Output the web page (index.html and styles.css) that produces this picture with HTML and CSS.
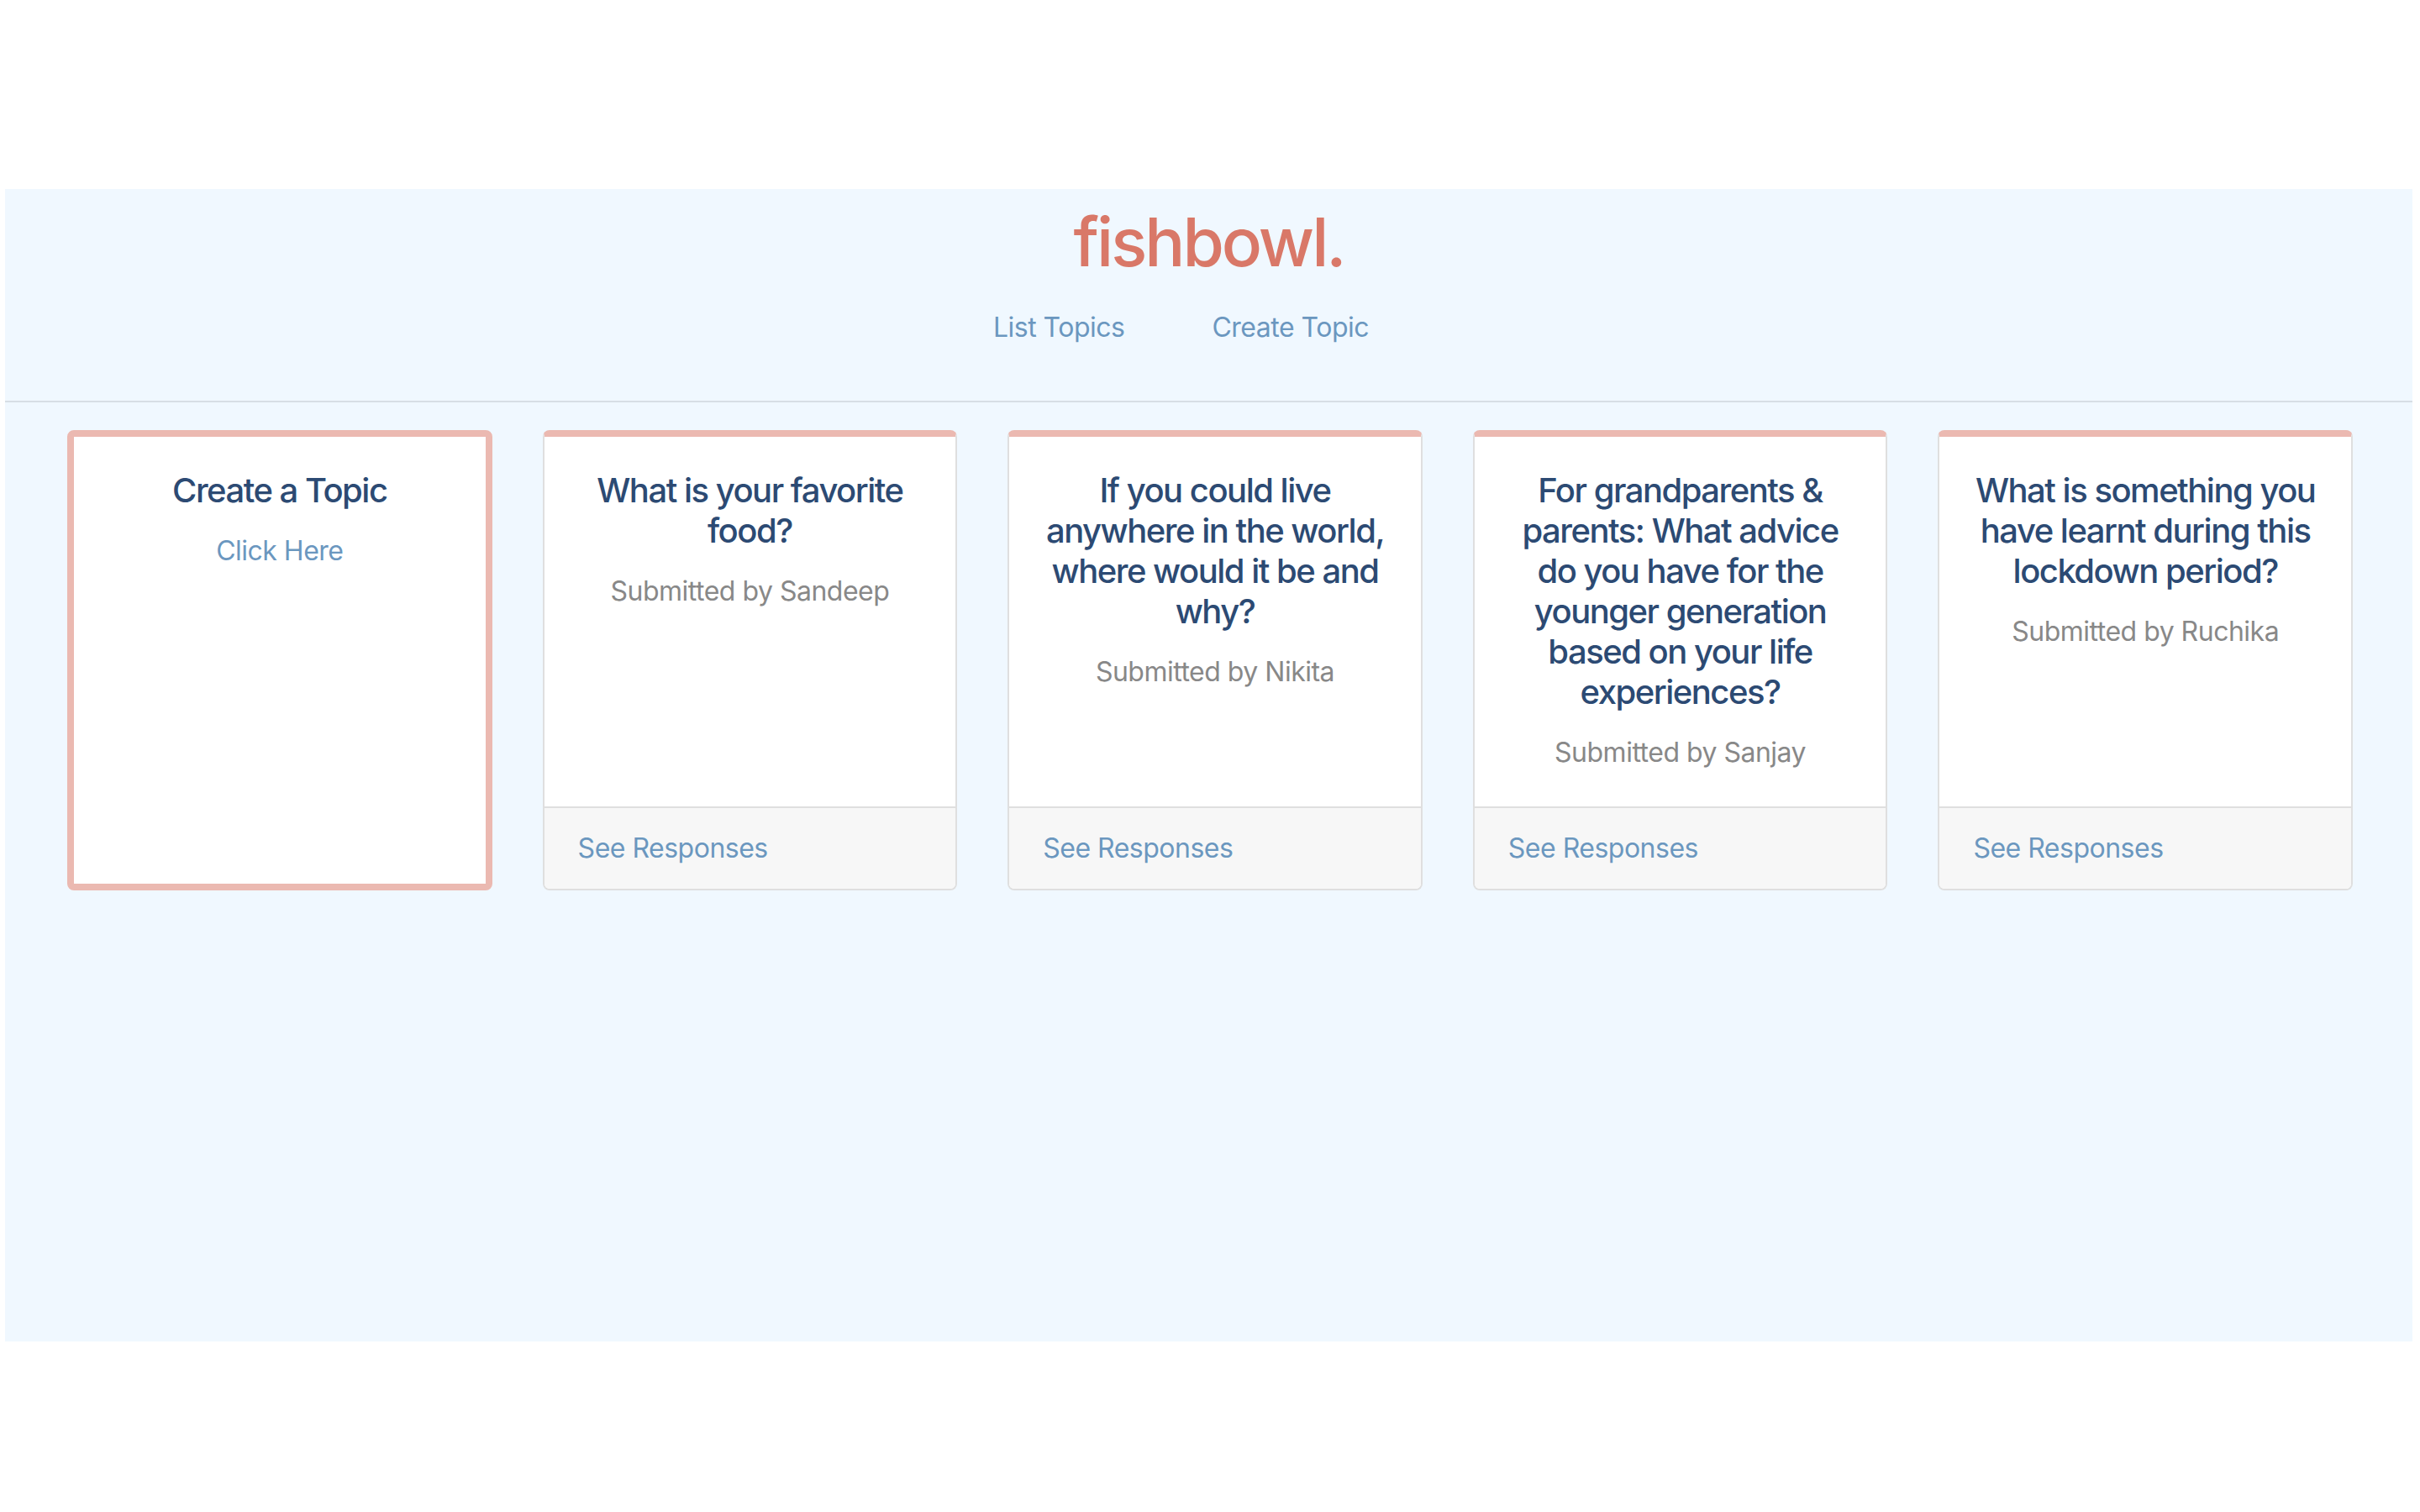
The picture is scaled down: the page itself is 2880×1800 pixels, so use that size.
FILE: index.html
```html
<!DOCTYPE html>
<html lang="en">
<head>
<meta charset="utf-8">
<title>fishbowl.</title>
<link rel="stylesheet" href="styles.css">
</head>
<body>
<div class="page">
  <header class="header">
    <h1 class="brand">fishbowl.</h1>
    <nav class="nav">
      <a class="nav-link" href="#">List Topics</a>
      <a class="nav-link" href="#">Create Topic</a>
    </nav>
  </header>
  <div class="rule"></div>
  <main class="deck">
    <div class="card card-create">
      <div class="card-body">
        <h5 class="card-title">Create a Topic</h5>
        <a class="card-link" href="#">Click Here</a>
      </div>
    </div>
    <div class="card">
      <div class="card-body">
        <h5 class="card-title">What is your favorite food?</h5>
        <p class="card-text">Submitted by Sandeep</p>
      </div>
      <div class="card-footer"><a class="card-link" href="#">See Responses</a></div>
    </div>
    <div class="card">
      <div class="card-body">
        <h5 class="card-title">If you could live anywhere in the world, where would it be and why?</h5>
        <p class="card-text">Submitted by Nikita</p>
      </div>
      <div class="card-footer"><a class="card-link" href="#">See Responses</a></div>
    </div>
    <div class="card">
      <div class="card-body">
        <h5 class="card-title">For grandparents &amp; parents: What advice do you have for the younger generation based on your life experiences?</h5>
        <p class="card-text">Submitted by Sanjay</p>
      </div>
      <div class="card-footer"><a class="card-link" href="#">See Responses</a></div>
    </div>
    <div class="card">
      <div class="card-body">
        <h5 class="card-title">What is something you have learnt during this lockdown period?</h5>
        <p class="card-text">Submitted by Ruchika</p>
      </div>
      <div class="card-footer"><a class="card-link" href="#">See Responses</a></div>
    </div>
  </main>
</div>
</body>
</html>
```
FILE: styles.css
```css
* { box-sizing: border-box; }

html, body {
  margin: 0;
  padding: 0;
  background: #ffffff;
}

body {
  font-family: Inter, "Noto Sans", "Liberation Sans", sans-serif;
  font-size: 32px;
  line-height: 48px;
  letter-spacing: -0.5px;
  color: #212529;
}

a { text-decoration: none; }

.page {
  margin: 225px 9px 0 6px;
  height: 1372px;
  background: #f0f8ff;
  display: flex;
  flex-direction: column;
}

.header {
  padding-top: 15px;
  display: flex;
  flex-direction: column;
  align-items: center;
}

.brand {
  margin: 0;
  font-size: 80px;
  line-height: 96px;
  font-weight: 500;
  letter-spacing: -3px;
  color: #d97868;
}

.nav {
  margin-top: 30px;
  display: flex;
  gap: 104px;
  padding-right: 66px;
}

.nav-link {
  font-size: 32px;
  line-height: 48px;
  color: #6b97bf;
}

.rule {
  margin: 63px 0 33px;
  height: 2px;
  background: rgba(0, 0, 0, 0.1);
}

.deck {
  display: flex;
  align-items: stretch;
  gap: 60px;
  padding: 0 71px 0 74px;
}

.card {
  flex: 1 0 0%;
  display: flex;
  flex-direction: column;
  background: #ffffff;
  border: 2px solid #dfdfdf;
  border-top: 8px solid #ebb9b1;
  border-radius: 8px;
  overflow: hidden;
}

.card-create {
  border: 8px solid #ebb9b1;
}

.card-body {
  flex: 1 1 auto;
  padding: 40px;
  text-align: center;
}

.card-title {
  margin: 0 0 24px;
  font-size: 40px;
  line-height: 48px;
  font-weight: 500;
  letter-spacing: -1.5px;
  color: #2c4a73;
}

.card-text {
  margin: 0;
  color: #888888;
}

.card-link {
  color: #6b97bf;
}

.card-footer {
  padding: 24px 40px;
  background: #f7f7f7;
  border-top: 2px solid #dfdfdf;
}
```
